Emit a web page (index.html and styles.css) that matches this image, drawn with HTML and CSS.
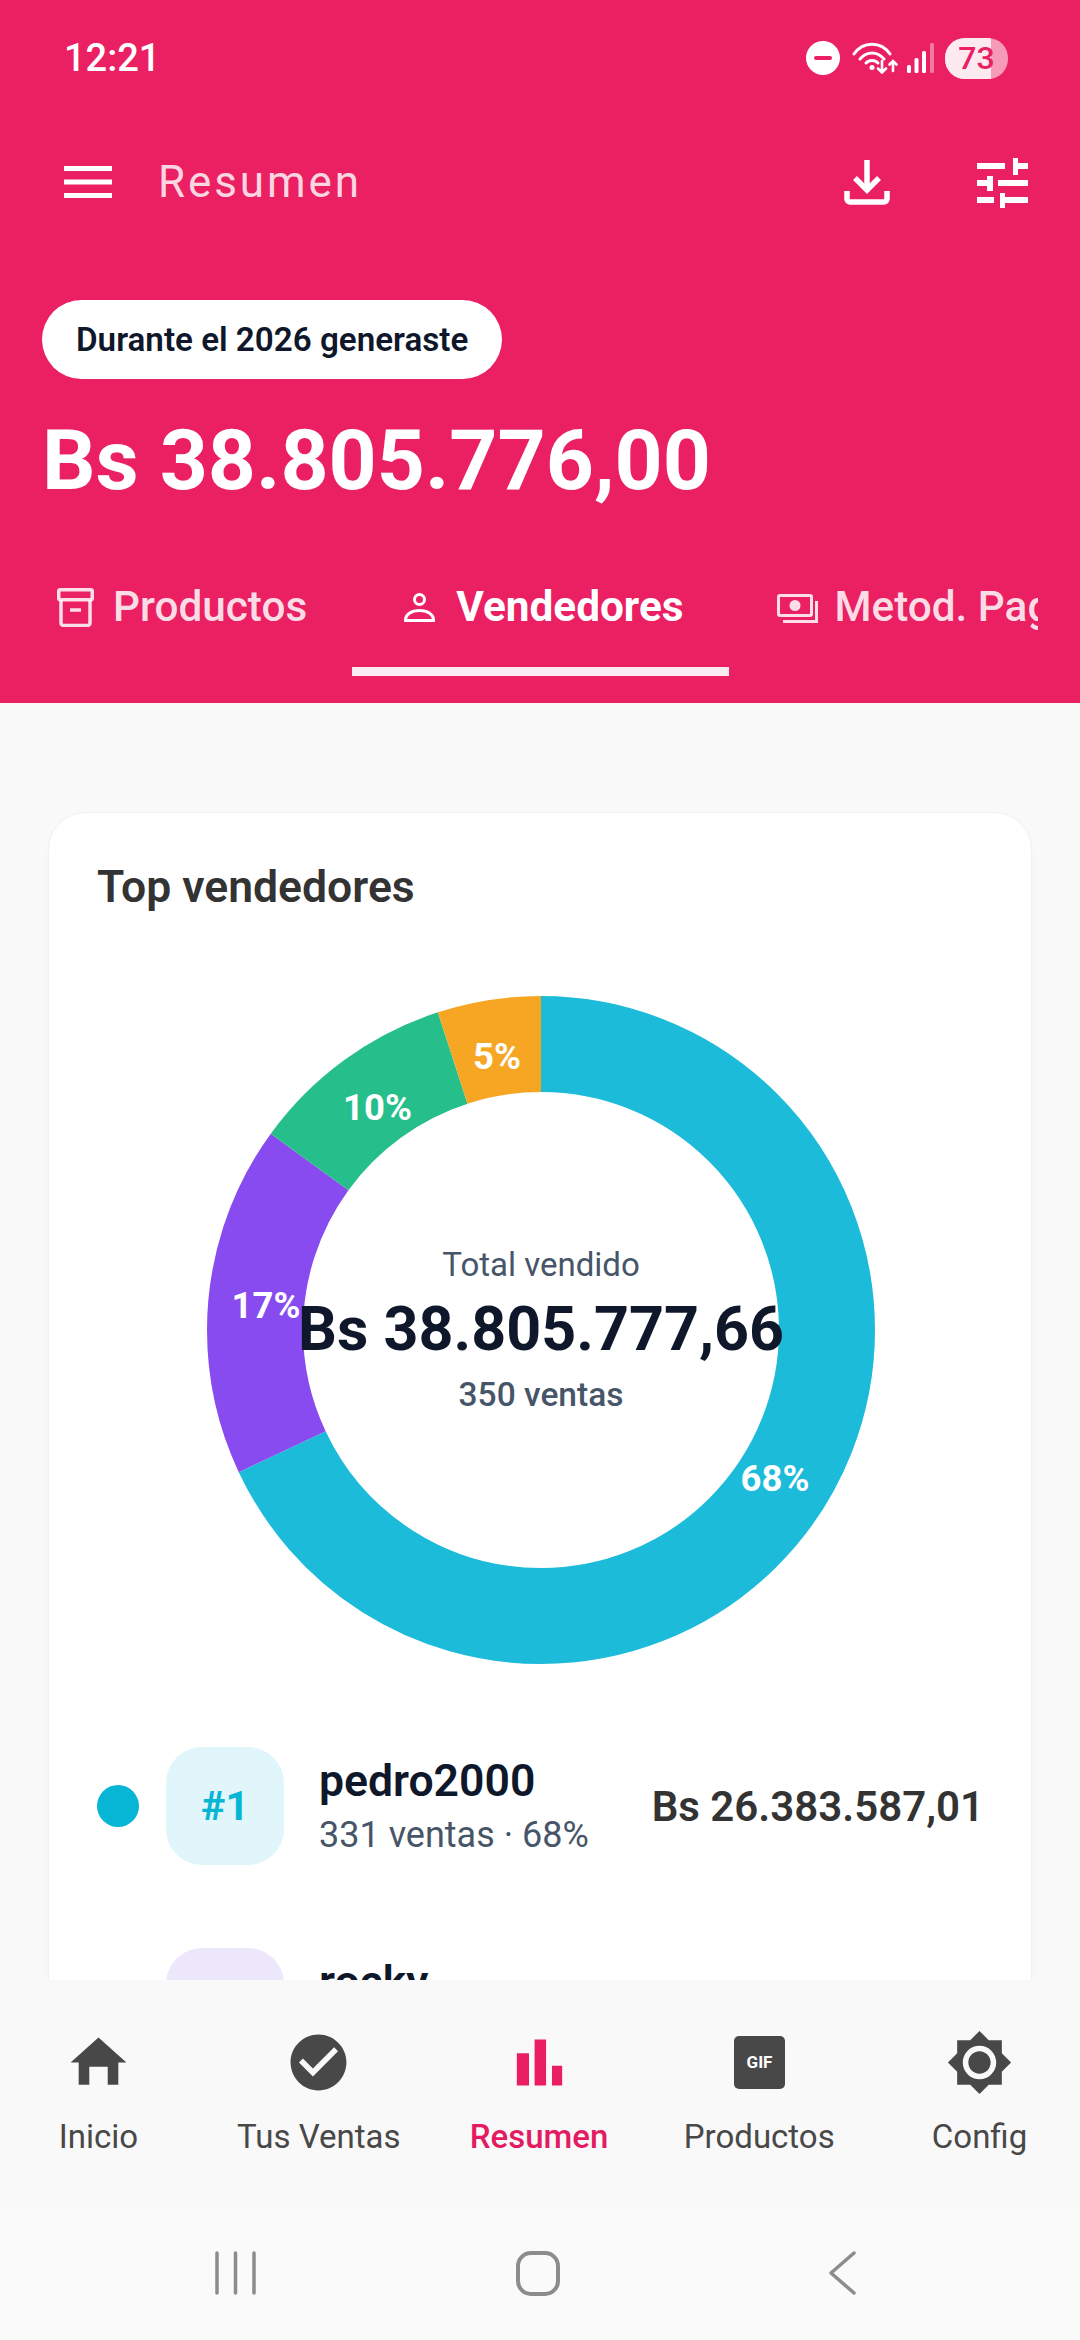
FILE: index.html
```html
<!DOCTYPE html>
<html lang="es">
<head>
<meta charset="utf-8">
<title>Resumen</title>
<link rel="stylesheet" href="styles.css">
</head>
<body>
<div class="app">
  <header class="hero">
    <div class="status">
      <span class="clock">12:21</span>
      <div class="status-icons">
        <svg class="st-dnd" viewBox="0 0 34 34"><circle cx="17" cy="17" r="17" fill="#fff"/><rect x="8" y="15" width="18" height="4" rx="2" fill="#ea2063"/></svg>
        <svg class="st-wifi" viewBox="0 0 48 32" fill="none" stroke="#fff" stroke-width="3" stroke-linecap="round"><path d="M2 12C11 -1 29 -1 38 12"/><path d="M8 17C15 9 25 9 32 17"/><path d="M14 21C17 17.500 23 17.500 26 21"/><circle cx="20" cy="25.500" r="2.500" fill="#fff" stroke="none"/><path d="M30 19V30.500M26 26.500l4 4 4-4" stroke-width="2.600"/><path d="M41 29V19M37.500 22.500l3.500-3.500 3.500 3.500" stroke-width="2.600"/></svg>
        <svg class="st-signal" viewBox="0 0 27 30"><rect x="0" y="22" width="4" height="8" rx="1.500" fill="#fff"/><rect x="7.500" y="15" width="4" height="15" rx="1.500" fill="#fff"/><rect x="15" y="8" width="4" height="22" rx="1.500" fill="#fff"/><rect x="23" y="0" width="4" height="30" rx="1.500" fill="#fff" opacity=".4"/></svg>
        <div class="battery"><div class="battery-fill"></div><span class="battery-num">73</span></div>
      </div>
    </div>
    <div class="toolbar">
      <svg class="menu" viewBox="0 0 48 32" fill="#fff"><rect y="0" width="48" height="5"/><rect y="13.500" width="48" height="5"/><rect y="27" width="48" height="5"/></svg>
      <h1 class="page-title">Resumen</h1>
      <div class="tool-actions">
        <svg class="ic-download" viewBox="0 0 46 46" fill="none" stroke="#fff" stroke-width="5.500"><path d="M23 1V31"/><path d="M11 19L23 31L35 19"/><path d="M3 32V40a3 3 0 0 0 3 3H40a3 3 0 0 0 3-3V32"/></svg>
        <svg class="ic-tune" viewBox="0 0 51 51" fill="#fff"><rect x="0" y="6" width="28" height="6"/><rect x="36" y="1" width="5" height="17"/><rect x="36" y="6" width="15" height="6"/><rect x="0" y="23" width="10" height="6"/><rect x="10" y="19" width="6" height="15"/><rect x="21" y="23" width="30" height="6"/><rect x="0" y="40" width="17" height="6"/><rect x="23" y="36" width="5" height="15"/><rect x="28" y="40" width="23" height="6"/></svg>
      </div>
    </div>
    <div class="chip">Durante el 2026 generaste</div>
    <div class="hero-amount">Bs 38.805.776,00</div>
    <nav class="tabs">
      <div class="tab tab-first">
        <svg class="tab-ic ic-box" viewBox="0 0 37 39" fill="none" stroke="currentColor" stroke-width="3.500"><rect x="1.750" y="1.750" width="33.500" height="10" rx="1.500"/><path d="M4 12V35a2.500 2.500 0 0 0 2.500 2.500H30.500A2.500 2.500 0 0 0 33 35V12"/><path d="M13 22H24"/></svg>
        <span>Productos</span>
      </div>
      <div class="tab tab-active">
        <svg class="tab-ic ic-person" viewBox="0 0 31 29" fill="none" stroke="currentColor" stroke-width="3"><circle cx="15.500" cy="6.500" r="5"/><path d="M1.500 27.500C1.500 21 8 17.500 15.500 17.500S29.500 21 29.500 27.500Z"/></svg>
        <span>Vendedores</span>
      </div>
      <div class="tab">
        <svg class="tab-ic ic-pay" viewBox="0 0 41 29" fill="none" stroke="currentColor" stroke-width="3"><rect x="1.500" y="1.500" width="33" height="20" rx="1.500"/><circle cx="18" cy="11.500" r="5.500" fill="currentColor" stroke="none"/><path d="M39.500 7V27.500H6"/></svg>
        <span>Metod. Pago</span>
      </div>
    </nav>
  </header>

  <main class="content">
    <section class="card">
      <h2 class="card-title">Top vendedores</h2>
      <div class="donut">
        <svg class="donut-svg" viewBox="0 0 668 668">
          <g fill="none" stroke-width="96" transform="rotate(-90 334 334)">
            <circle cx="334" cy="334" r="286" stroke="#1cbbd9" pathLength="100" stroke-dasharray="68 32" stroke-dashoffset="0"/>
            <circle cx="334" cy="334" r="286" stroke="#884bef" pathLength="100" stroke-dasharray="17 83" stroke-dashoffset="-68"/>
            <circle cx="334" cy="334" r="286" stroke="#26bf8c" pathLength="100" stroke-dasharray="10 90" stroke-dashoffset="-85"/>
            <circle cx="334" cy="334" r="286" stroke="#f6a623" pathLength="100" stroke-dasharray="5 95" stroke-dashoffset="-95"/>
          </g>
          <g text-anchor="middle" dominant-baseline="central">
            <text x="568" y="482" class="pct">68%</text>
            <text x="59" y="309" class="pct">17%</text>
            <text x="170.500" y="111" class="pct">10%</text>
            <text x="290" y="60" class="pct">5%</text>
          </g>
        </svg>
        <div class="donut-center">
          <div class="dc-label">Total vendido</div>
          <div class="dc-amount">Bs 38.805.777,66</div>
          <div class="dc-count">350 ventas</div>
        </div>
      </div>
      <ul class="sellers">
        <li class="seller">
          <span class="dot dot-1"></span>
          <span class="rank rank-1">#1</span>
          <div class="seller-info">
            <div class="seller-name">pedro2000</div>
            <div class="seller-sub">331 ventas · 68%</div>
          </div>
          <div class="seller-amount">Bs 26.383.587,01</div>
        </li>
        <li class="seller">
          <span class="dot dot-2"></span>
          <span class="rank rank-2"></span>
          <div class="seller-info">
            <div class="seller-name">rocky</div>
          </div>
        </li>
      </ul>
    </section>
  </main>

  <footer class="bottom">
    <nav class="bottom-nav">
      <div class="nav-item">
        <svg class="nav-ic" viewBox="0 0 24 24"><path d="M8.700 20v-6.500h6.600V20h3.800v-8H22L12 3 2 12h2.900v8z"/></svg>
        <span>Inicio</span>
      </div>
      <div class="nav-item">
        <svg class="nav-ic" viewBox="0 0 24 24"><path d="M12 2C6.480 2 2 6.480 2 12s4.480 10 10 10 10-4.480 10-10S17.520 2 12 2zm-2 15l-5-5 1.410-1.410L10 14.170l7.590-7.590L19 8l-9 9z"/></svg>
        <span>Tus Ventas</span>
      </div>
      <div class="nav-item nav-active">
        <svg class="nav-ic" viewBox="1.800 1.800 20.400 20.400"><path d="M5.100 9.200h3.700V19H5.100zM10.500 5H14v14h-3.500zm5.300 8h3.100v6h-3.100z"/></svg>
        <span>Resumen</span>
      </div>
      <div class="nav-item">
        <svg class="nav-ic" viewBox="0 0 67 67"><rect x="8" y="7" width="51" height="53" rx="5"/><text x="33.500" y="39" text-anchor="middle" class="gif-text">GIF</text></svg>
        <span>Productos</span>
      </div>
      <div class="nav-item">
        <svg class="nav-ic" viewBox="0 0 24 24"><path d="M20 8.690V4h-4.690L12 .690 8.690 4H4v4.690L.690 12 4 15.310V20h4.690L12 23.310 15.310 20H20v-4.690L23.310 12 20 8.690zM12 18c-3.310 0-6-2.690-6-6s2.690-6 6-6 6 2.690 6 6-2.690 6-6 6zm0-10c-2.210 0-4 1.790-4 4s1.790 4 4 4 4-1.790 4-4-1.790-4-4-4z"/></svg>
        <span>Config</span>
      </div>
    </nav>
    <div class="sys-nav">
      <svg class="sys-recent" viewBox="0 0 41 44" stroke="#8c8c8c" stroke-width="3.500" stroke-linecap="round"><path d="M2 2V42M20.500 2V42M39 2V42"/></svg>
      <svg class="sys-home" viewBox="0 0 44 45" fill="none" stroke="#8c8c8c" stroke-width="4"><rect x="2" y="2" width="40" height="41" rx="13"/></svg>
      <svg class="sys-back" viewBox="0 0 28 44" fill="none" stroke="#8c8c8c" stroke-width="3.500" stroke-linecap="round" stroke-linejoin="round"><path d="M26 2L3 22L26 42"/></svg>
    </div>
  </footer>
</div>
</body>
</html>
```
FILE: styles.css
```css
* { box-sizing: border-box; margin: 0; padding: 0; }
html, body { width: 1080px; height: 2340px; overflow: hidden; }
body { font-family: Roboto, "Noto Sans", sans-serif; background: #f9f9fa; }
.app { width: 1080px; height: 2340px; display: flex; flex-direction: column; }

.hero { height: 703px; flex: none; background: #ea2063; color: #fff; display: flex; flex-direction: column; }

.status { height: 116px; flex: none; display: flex; align-items: center; justify-content: space-between; padding: 0 72px 0 64px; }
.clock { font-size: 38px; font-weight: 500; }
.status-icons { display: flex; align-items: center; }
.st-dnd { width: 34px; height: 34px; }
.st-wifi { width: 48px; height: 32px; margin-left: 12px; }
.st-signal { width: 27px; height: 30px; margin-left: 7px; }
.battery { position: relative; width: 63px; height: 41px; margin-left: 11px; border-radius: 20px; overflow: hidden; background: rgba(255,255,255,.55); display: flex; align-items: center; justify-content: center; }
.battery-fill { position: absolute; left: 0; top: 0; bottom: 0; width: 46px; background: #fdeaf0; }
.battery-num { position: relative; color: #ea2063; font-size: 32px; font-weight: 500; }

.toolbar { height: 132px; flex: none; display: flex; align-items: center; padding: 0 52px 0 64px; }
.menu { width: 48px; height: 32px; }
.page-title { font-size: 44px; font-weight: 400; letter-spacing: 2.900px; margin-left: 46px; color: rgba(255,255,255,.82); }
.tool-actions { margin-left: auto; display: flex; align-items: center; gap: 87px; }
.ic-download { width: 46px; height: 46px; }
.ic-tune { width: 51px; height: 51px; }

.chip { align-self: flex-start; height: 79px; margin: 52px 0 0 42px; padding: 0 34px; border-radius: 40px; background: #fff; color: #0f172a; font-size: 33.200px; font-weight: 600; display: flex; align-items: center; }
.hero-amount { margin: 26px 0 0 42px; font-size: 84px; line-height: 112px; font-weight: 700; }

.tabs { margin: 53px 42px 0; height: 106px; display: flex; overflow: hidden; color: rgba(255,255,255,.85); }
.tab { flex: none; height: 106px; padding: 12px 45px 0 48px; display: flex; align-items: flex-start; font-size: 42.300px; font-weight: 500; white-space: nowrap; border-bottom: 9px solid transparent; }
.tab span { line-height: 50px; }
.tab-first { padding-left: 15px; }
.tab-active { color: #fff; font-weight: 700; border-bottom-color: #fbeaf1; padding-left: 52px; }
.tab-ic { flex: none; }
.ic-box { width: 37px; height: 39px; margin-right: 19px; margin-top: 6px; }
.ic-person { width: 31px; height: 29px; margin-right: 21px; margin-top: 11px; }
.ic-pay { width: 41px; height: 29px; margin-right: 17px; margin-top: 12px; }

.content { flex: 1; min-height: 0; overflow: hidden; padding: 109px 48px 0; }
.card { background: #fff; border: 1px solid #f1f1f4; border-radius: 38px; padding: 48px 48px 40px; box-shadow: 0 2px 8px rgba(0,0,0,.02); }
.card-title { font-size: 44.500px; font-weight: 600; color: #333; line-height: 52px; }

.donut { position: relative; width: 668px; height: 668px; margin: 83px 108px 0 110px; }
.donut-svg { display: block; width: 668px; height: 668px; }
.pct { fill: #fff; font-size: 36.500px; font-weight: 700; }
.donut-center { position: absolute; inset: 0; display: flex; flex-direction: column; align-items: center; justify-content: center; }
.dc-label { font-size: 33px; line-height: 40px; color: #475569; }
.dc-amount { font-size: 61px; line-height: 68px; font-weight: 700; color: #0f172a; white-space: nowrap; margin: 10px 0 12px; }
.dc-count { font-size: 33.500px; line-height: 40px; font-weight: 500; color: #475569; }

.sellers { list-style: none; margin-top: 83px; display: flex; flex-direction: column; gap: 83px; }
.seller { display: flex; align-items: center; height: 118px; }
.dot { width: 42px; height: 42px; border-radius: 50%; flex: none; }
.dot-1 { background: #06b6d4; }
.dot-2 { background: #8b5cf6; }
.rank { width: 118px; height: 118px; margin-left: 27px; border-radius: 36px; flex: none; display: flex; align-items: center; justify-content: center; font-size: 41px; font-weight: 700; }
.rank-1 { background: #e1f6fa; color: #06b6d4; }
.rank-2 { background: #ede7fb; color: #8b5cf6; }
.seller-info { margin-left: 35px; align-self: flex-start; padding-top: 6px; }
.seller-name { font-size: 44.500px; line-height: 56px; font-weight: 600; color: #0f172a; }
.seller-sub { font-size: 36px; line-height: 44px; color: #475569; margin-top: 4px; }
.seller-amount { margin-left: auto; margin-right: -1px; font-size: 42px; font-weight: 600; color: #333; }

.bottom { height: 360px; flex: none; background: #faf9fa; position: relative; }
.bottom-nav { height: 227px; padding: 49px 2px 0 0; display: flex; justify-content: space-between; }
.nav-item { width: 197px; display: flex; flex-direction: column; align-items: center; color: #484848; font-size: 33px; }
.nav-item span { margin-top: 19px; line-height: 44px; white-space: nowrap; }
.nav-ic { width: 67px; height: 67px; fill: #484848; display: block; }
.nav-active { color: #e31c62; font-weight: 500; }
.nav-active .nav-ic { fill: #e91e63; }
.gif-text { font-size: 17px; font-weight: 700; fill: #fff; }

.sys-nav { height: 133px; background: #fbfafb; display: flex; align-items: flex-start; justify-content: flex-start; padding-top: 44px; }
.sys-recent { width: 41px; height: 44px; margin-left: 215px; }
.sys-home { width: 44px; height: 45px; margin-left: 260px; }
.sys-back { width: 28px; height: 44px; margin-left: 268px; }
```
